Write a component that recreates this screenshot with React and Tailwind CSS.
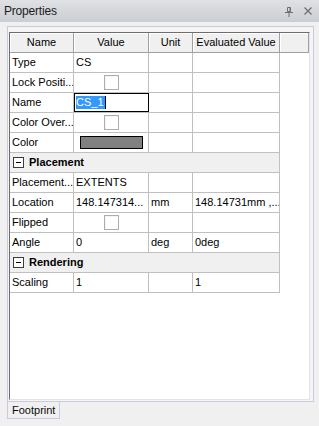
import React from "react";

const C1 = "w-[64px]";
const C2 = "w-[75px]";
const C3 = "w-[44px]";
const C4 = "w-[87px]";

function Cell({ w, children, center }) {
  return (
    <div
      className={
        w +
        " h-full shrink-0 border-r border-[#c0c0c0] flex items-center px-[2px] overflow-hidden whitespace-nowrap " +
        (center ? "justify-center" : "")
      }
    >
      {children}
    </div>
  );
}

function Row({ a, b, c, d, bCenter }) {
  return (
    <div className="flex h-[20px] w-[270px] border-b border-[#c0c0c0]">
      <Cell w={C1}>{a}</Cell>
      <Cell w={C2} center={bCenter}>{b}</Cell>
      <Cell w={C3}>{c}</Cell>
      <Cell w={C4}>{d}</Cell>
    </div>
  );
}

function Check() {
  return (
    <div className="w-[15px] h-[15px] border border-[#adadad] bg-white shadow-[inset_1px_1px_0_#f4f4f4]" />
  );
}

function Category({ label }) {
  return (
    <div className="flex items-center h-[20px] w-[270px] border-b border-r border-[#c0c0c0] bg-[#f0f0f0]">
      <div className="ml-[3px] w-[11px] h-[11px] border border-[#3c3c3c] bg-white flex items-center justify-center">
        <div className="w-[5px] h-px bg-black" />
      </div>
      <span className="ml-[5px] font-bold">{label}</span>
    </div>
  );
}

function Head({ w, children }) {
  return (
    <div
      className={
        w +
        " h-full shrink-0 bg-[#f0f0f0] border-r border-b border-[#a0a0a0] shadow-[inset_1px_1px_0_#ffffff] flex items-center justify-center whitespace-nowrap overflow-hidden"
      }
    >
      {children}
    </div>
  );
}

export default function App() {
  return (
    <div className="w-[319px] h-[426px] bg-[#f0f0f0] overflow-hidden text-[11px] text-black font-['Liberation_Sans',Arial,sans-serif]">
      <div className="h-[22px] bg-gradient-to-b from-[#dfe1e4] to-[#cbced2] flex items-center pl-[4px] pr-[7px]">
        <span className="text-[12px] text-[#1b1b1b] tracking-[-0.2px]">Properties</span>
        <div className="ml-auto flex items-center gap-[11px]">
          <svg width="8" height="10" viewBox="0 0 8 10" className="mt-[1px]">
            <path d="M2.5 0.5h3v4h-3z" fill="none" stroke="#6d6d6d" />
            <path d="M5 0.5v4" stroke="#6d6d6d" />
            <path d="M0 5.5h8" stroke="#6d6d6d" />
            <path d="M4 6v4" stroke="#6d6d6d" />
          </svg>
          <svg width="8" height="8" viewBox="0 0 8 8">
            <path d="M0.5 0.5l7 7M7.5 0.5l-7 7" stroke="#6d6d6d" strokeWidth="1.2" />
          </svg>
        </div>
      </div>
      <div className="pl-[7px] pr-[5px] pt-[4px]">
        <div className="border border-[#cbc9dd] bg-[#f5f5f5] pt-[5px] pl-[1px] pr-[3px] pb-[1px]">
          <div className="h-[368px] bg-white border-l border-t border-[#6d6d6d] border-r border-b border-r-[#e3e3e3] border-b-[#e3e3e3]">
            <div className="flex h-[20px]">
              <Head w={C1}>Name</Head>
              <Head w={C2}>Value</Head>
              <Head w={C3}>Unit</Head>
              <Head w={C4}>Evaluated Value</Head>
              <Head w="w-[29px]"></Head>
            </div>
            <Row a="Type" b="CS" />
            <Row a="Lock Positi..." b={<Check />} bCenter />
            <div className="flex h-[20px] w-[270px] border-b border-[#c0c0c0]">
              <Cell w={C1}>Name</Cell>
              <div className="w-[75px] h-full shrink-0 border-r border-b border-black -mb-px shadow-[inset_1px_1px_0_#000000] flex items-center px-[2px]">
                <span className="bg-[#3399ff] text-white leading-[13px] pr-px">CS_1</span>
                <span className="w-px h-[13px] bg-black" />
              </div>
              <Cell w={C3}></Cell>
              <Cell w={C4}></Cell>
            </div>
            <Row a="Color Over..." b={<Check />} bCenter />
            <div className="flex h-[20px] w-[270px] border-b border-[#c0c0c0]">
              <Cell w={C1}>Color</Cell>
              <div className="w-[75px] h-full shrink-0 border-r border-[#c0c0c0] flex items-center pl-[6px]">
                <div className="w-[63px] h-[13px] bg-[#808080] border border-black" />
              </div>
              <Cell w={C3}></Cell>
              <Cell w={C4}></Cell>
            </div>
            <Category label="Placement" />
            <Row a="Placement..." b="EXTENTS" />
            <Row a="Location" b="148.147314..." c="mm" d="148.14731mm ,..." />
            <Row a="Flipped" b={<Check />} bCenter />
            <Row a="Angle" b="0" c="deg" d="0deg" />
            <Category label="Rendering" />
            <Row a="Scaling" b="1" d="1" />
          </div>
        </div>
        <div className="w-[53px] h-[17px] border-l border-r border-b border-[#cbc9dd] bg-[#f0f0f0] flex items-center pl-[4px] text-[#0a0a0a]">
          Footprint
        </div>
      </div>
    </div>
  );
}
